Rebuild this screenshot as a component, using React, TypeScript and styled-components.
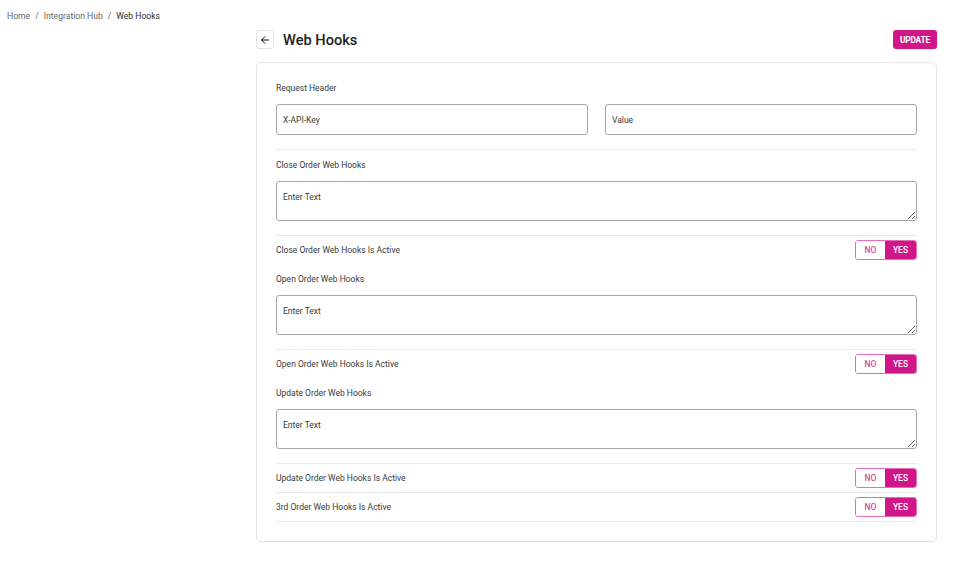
import styled, { createGlobalStyle } from "styled-components";
import { ArrowLeft } from "lucide-react";

const GlobalStyle = createGlobalStyle`
  * {
    box-sizing: border-box;
  }

  body {
    margin: 0;
    background: #ffffff;
    font-family: Roboto, "Liberation Sans", Arial, sans-serif;
    color: #3a3a3a;
  }
`;

const BRAND = "#d1168a";

const Page = styled.div`
  width: 975px;
  min-height: 563px;
`;

const Breadcrumb = styled.nav`
  display: flex;
  align-items: center;
  gap: 5px;
  padding: 10px 7px 0;
  height: 21px;
  font-size: 8.6px;
  color: #666666;
`;

const Crumb = styled.span<{ $current?: boolean }>`
  color: ${({ $current }) => ($current ? "#2a2a2a" : "#666666")};
`;

const Main = styled.main`
  padding: 9px 38px 20px 256px;
`;

const Header = styled.header`
  display: flex;
  align-items: center;
  height: 19px;
  margin-bottom: 13px;
`;

const BackButton = styled.button`
  display: inline-flex;
  align-items: center;
  justify-content: center;
  width: 18px;
  height: 19px;
  padding: 0;
  border: 1px solid #e4e4e4;
  border-radius: 3px;
  background: #ffffff;
  color: #111111;
  cursor: pointer;
`;

const Title = styled.h1`
  margin: 0 0 0 9px;
  font-size: 14.6px;
  font-weight: 500;
  color: #222222;
  flex: 1;
`;

const UpdateButton = styled.button`
  width: 44px;
  height: 19px;
  padding: 0;
  border: none;
  border-radius: 3px;
  background: ${BRAND};
  color: #ffffff;
  font-family: inherit;
  font-size: 8.4px;
  font-weight: 700;
  letter-spacing: -0.2px;
  cursor: pointer;
`;

const Card = styled.section`
  border: 1px solid #e4e4e4;
  border-radius: 5px;
  box-shadow: 0 1px 2px rgba(0, 0, 0, 0.04);
  padding: 10px 19px 19px;
`;

const Section = styled.div`
  padding: 9px 0 14px;
  border-bottom: 1px solid #ebebeb;
`;

const Label = styled.div`
  font-size: 8.5px;
  line-height: 12px;
  color: #3a3a3a;
  margin-bottom: 10px;
`;

const FieldGrid = styled.div`
  display: grid;
  grid-template-columns: 1fr 1fr;
  gap: 17px;
`;

const Input = styled.input`
  width: 100%;
  height: 31px;
  padding: 0 6px;
  border: 1px solid #a6a6a6;
  border-radius: 3px;
  font-family: inherit;
  font-size: 8.5px;
  color: #3a3a3a;
  outline: none;

  &::placeholder {
    color: #3a3a3a;
  }
`;

const TextArea = styled.textarea`
  display: block;
  width: 100%;
  height: 40px;
  padding: 10px 6px;
  border: 1px solid #a6a6a6;
  border-radius: 3px;
  font-family: inherit;
  font-size: 8.5px;
  color: #3a3a3a;
  outline: none;
  resize: vertical;

  &::placeholder {
    color: #3a3a3a;
  }
`;

const ToggleRow = styled.div<{ $divider?: boolean }>`
  display: flex;
  align-items: center;
  justify-content: space-between;
  height: ${({ $divider }) => ($divider ? "29px" : "28px")};
  border-bottom: ${({ $divider }) => ($divider ? "1px solid #ebebeb" : "none")};
  font-size: 8.5px;
  color: #3a3a3a;
`;

const Toggle = styled.div`
  display: flex;
  height: 20px;
  border-radius: 3px;
  overflow: hidden;
  border: 1px solid #e46cb4;
`;

const ToggleOption = styled.button<{ $active?: boolean }>`
  width: ${({ $active }) => ($active ? "31px" : "29px")};
  height: 100%;
  padding: 0;
  border: none;
  background: ${({ $active }) => ($active ? BRAND : "#ffffff")};
  color: ${({ $active }) => ($active ? "#ffffff" : "#d54c9f")};
  font-family: inherit;
  font-size: 8.5px;
  font-weight: 500;
  cursor: pointer;
`;

const YesNo = ({ value }: { value: boolean }) => (
  <Toggle>
    <ToggleOption $active={!value}>NO</ToggleOption>
    <ToggleOption $active={value}>YES</ToggleOption>
  </Toggle>
);

const hooks = [
  { name: "Close Order Web Hooks", divider: false },
  { name: "Open Order Web Hooks", divider: false },
  { name: "Update Order Web Hooks", divider: true },
];

export default function App() {
  return (
    <Page>
      <GlobalStyle />
      <Breadcrumb>
        <Crumb>Home</Crumb>
        <span>/</span>
        <Crumb>Integration Hub</Crumb>
        <span>/</span>
        <Crumb $current>Web Hooks</Crumb>
      </Breadcrumb>
      <Main>
        <Header>
          <BackButton aria-label="Back">
            <ArrowLeft size={12} strokeWidth={2} />
          </BackButton>
          <Title>Web Hooks</Title>
          <UpdateButton>UPDATE</UpdateButton>
        </Header>
        <Card>
          <Section>
            <Label>Request Header</Label>
            <FieldGrid>
              <Input placeholder="X-API-Key" />
              <Input placeholder="Value" />
            </FieldGrid>
          </Section>
          {hooks.map((hook) => (
            <div key={hook.name}>
              <Section>
                <Label>{hook.name}</Label>
                <TextArea placeholder="Enter Text" />
              </Section>
              <ToggleRow $divider={hook.divider}>
                <span>{hook.name} Is Active</span>
                <YesNo value />
              </ToggleRow>
            </div>
          ))}
          <ToggleRow $divider>
            <span>3rd Order Web Hooks Is Active</span>
            <YesNo value />
          </ToggleRow>
        </Card>
      </Main>
    </Page>
  );
}
